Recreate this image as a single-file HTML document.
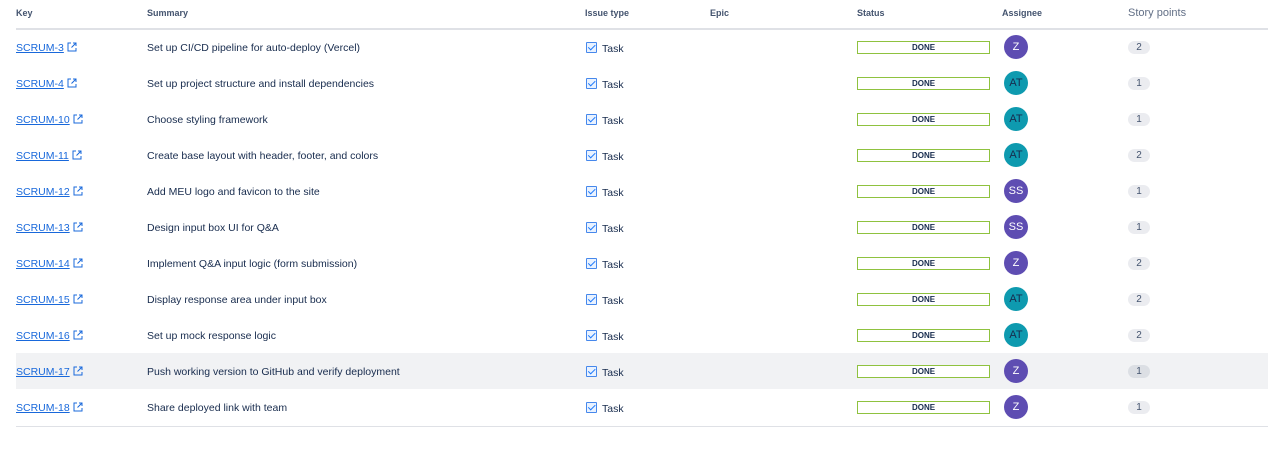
<!DOCTYPE html>
<html><head><meta charset="utf-8"><style>
body{margin:0;width:1280px;height:456px;background:#fff;font-family:"Liberation Sans",sans-serif;position:relative;overflow:hidden}
.hdr{position:absolute;top:0;left:16px;width:1252px;height:28px;border-bottom:2px solid #dfe1e6;font-size:9px;font-weight:bold;color:#44546f}
.hdr span{position:absolute;top:8px}
.row{position:absolute;left:16px;width:1252px;height:36px;font-size:10.5px;color:#172b4d}
.row>*{position:absolute}
.key{left:0;top:13px;color:#1868db;white-space:nowrap}
.key u{text-decoration:underline}
.key svg{vertical-align:-1px;margin-left:3px}
.sum{left:131px;top:13px}
.task{left:570px;top:13px}
.cb{display:inline-block;width:9px;height:9px;border:1px solid #4688ec;border-radius:1px;vertical-align:-1px;margin-right:5px;position:relative;background:#e9f2ff}
.cb:after{content:"";position:absolute;left:2.5px;top:0px;width:2.5px;height:5.5px;border:solid #1d7afc;border-width:0 1.3px 1.3px 0;transform:rotate(45deg)}
.st{left:841px;top:12px;width:131px;height:11px;border:1px solid #8fc23f;font-size:8px;font-weight:bold;text-align:center;line-height:11px;color:#172b4d;background:#fff}
.av{left:988px;top:6px;width:24px;height:24px;border-radius:50%;color:#fff;font-size:11px;text-align:center;line-height:24px}
.z{background:#5e4db2}.at{background:#0e9aaf;color:#172b4d}
.pt{left:1112px;top:12px;width:22px;height:13px;border-radius:7px;background:#ebecf0;font-size:10px;text-align:center;line-height:13px;color:#44546f}
.line{position:absolute;left:16px;top:426px;width:1252px;height:1px;background:#dfe1e6}
</style></head><body>
<svg width="0" height="0" style="position:absolute"><defs><symbol id="e" viewBox="0 0 10 10"><path d="M4 1H1v8h8V6M6 1h3v3M9 1L4.5 5.5" fill="none" stroke="#1868db" stroke-width="1"/></symbol></defs></svg>
<div class="hdr"><span style="left:0">Key</span><span style="left:131px">Summary</span><span style="left:569px">Issue type</span><span style="left:694px">Epic</span><span style="left:841px">Status</span><span style="left:986px">Assignee</span><span style="left:1112px;font-weight:normal;font-size:11px;top:7px;color:#626f86">Story points</span></div>

<div class="row" style="top:29px"><a class="key"><u>SCRUM-3</u><svg width="10" height="10"><use href="#e"/></svg></a><span class="sum">Set up CI/CD pipeline for auto-deploy (Vercel)</span><span class="task"><i class="cb"></i>Task</span><span class="st">DONE</span><span class="av z">Z</span><span class="pt">2</span></div>
<div class="row" style="top:65px"><a class="key"><u>SCRUM-4</u><svg width="10" height="10"><use href="#e"/></svg></a><span class="sum">Set up project structure and install dependencies</span><span class="task"><i class="cb"></i>Task</span><span class="st">DONE</span><span class="av at">AT</span><span class="pt">1</span></div>
<div class="row" style="top:101px"><a class="key"><u>SCRUM-10</u><svg width="10" height="10"><use href="#e"/></svg></a><span class="sum">Choose styling framework</span><span class="task"><i class="cb"></i>Task</span><span class="st">DONE</span><span class="av at">AT</span><span class="pt">1</span></div>
<div class="row" style="top:137px"><a class="key"><u>SCRUM-11</u><svg width="10" height="10"><use href="#e"/></svg></a><span class="sum">Create base layout with header, footer, and colors</span><span class="task"><i class="cb"></i>Task</span><span class="st">DONE</span><span class="av at">AT</span><span class="pt">2</span></div>
<div class="row" style="top:173px"><a class="key"><u>SCRUM-12</u><svg width="10" height="10"><use href="#e"/></svg></a><span class="sum">Add MEU logo and favicon to the site</span><span class="task"><i class="cb"></i>Task</span><span class="st">DONE</span><span class="av z">SS</span><span class="pt">1</span></div>
<div class="row" style="top:209px"><a class="key"><u>SCRUM-13</u><svg width="10" height="10"><use href="#e"/></svg></a><span class="sum">Design input box UI for Q&amp;A</span><span class="task"><i class="cb"></i>Task</span><span class="st">DONE</span><span class="av z">SS</span><span class="pt">1</span></div>
<div class="row" style="top:245px"><a class="key"><u>SCRUM-14</u><svg width="10" height="10"><use href="#e"/></svg></a><span class="sum">Implement Q&amp;A input logic (form submission)</span><span class="task"><i class="cb"></i>Task</span><span class="st">DONE</span><span class="av z">Z</span><span class="pt">2</span></div>
<div class="row" style="top:281px"><a class="key"><u>SCRUM-15</u><svg width="10" height="10"><use href="#e"/></svg></a><span class="sum">Display response area under input box</span><span class="task"><i class="cb"></i>Task</span><span class="st">DONE</span><span class="av at">AT</span><span class="pt">2</span></div>
<div class="row" style="top:317px"><a class="key"><u>SCRUM-16</u><svg width="10" height="10"><use href="#e"/></svg></a><span class="sum">Set up mock response logic</span><span class="task"><i class="cb"></i>Task</span><span class="st">DONE</span><span class="av at">AT</span><span class="pt">2</span></div>
<div class="row" style="top:353px;background:#f1f2f4"><a class="key"><u>SCRUM-17</u><svg width="10" height="10"><use href="#e"/></svg></a><span class="sum">Push working version to GitHub and verify deployment</span><span class="task"><i class="cb"></i>Task</span><span class="st">DONE</span><span class="av z">Z</span><span class="pt" style="background:#dcdfe4">1</span></div>
<div class="row" style="top:389px"><a class="key"><u>SCRUM-18</u><svg width="10" height="10"><use href="#e"/></svg></a><span class="sum">Share deployed link with team</span><span class="task"><i class="cb"></i>Task</span><span class="st">DONE</span><span class="av z">Z</span><span class="pt">1</span></div>
<div class="line"></div>
</body></html>
